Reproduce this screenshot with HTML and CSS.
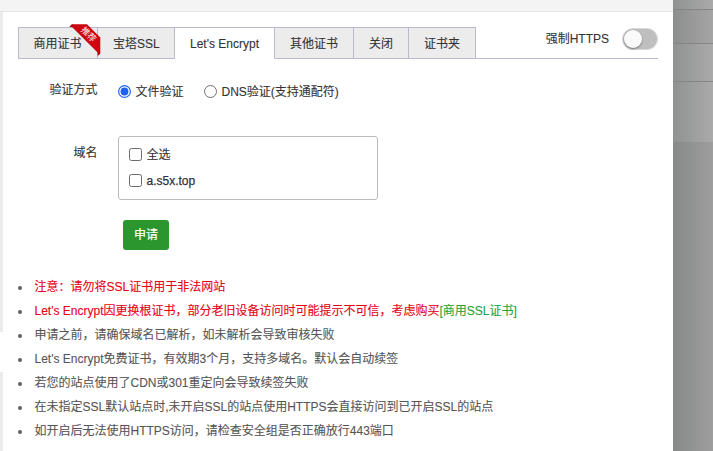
FILE: index.html
```html
<!DOCTYPE html>
<html lang="zh-CN">
<head>
<meta charset="utf-8">
<title>SSL</title>
<link rel="stylesheet" href="styles.css">
</head>
<body>
<div class="screen">
  <div class="dialog">
    <header class="dialog-head"></header>
    <div class="dialog-body">
      <aside class="side"><div class="side-active"></div></aside>
      <main class="content">
        <div class="tabbar">
          <nav class="tabs">
            <span class="tab t1">商用证书
              <svg class="ribbon" width="34" height="34" viewBox="0 0 34 34"><path d="M.5 3 3 .3H18L31.3 13.6V29.5L28.8 31.8V28.8L3 3Z" fill="#ce0610"/><path d="M.5 3 3 .3 5 3ZM31.3 29.5 28.8 31.8V27Z" fill="#a8000a"/><text x="19.6" y="13.4" transform="rotate(45 19.6 10.4)" text-anchor="middle" class="ribbon-text">推荐</text></svg>
            </span>
            <span class="tab t2">宝塔SSL</span>
            <span class="tab t3 on">Let's Encrypt</span>
            <span class="tab t4">其他证书</span>
            <span class="tab t5">关闭</span>
            <span class="tab t6">证书夹</span>
          </nav>
          <div class="force"><span>强制HTTPS</span><span class="switch"><i class="knob"></i></span></div>
        </div>
        <div class="row method">
          <span class="label">验证方式</span>
          <label class="option first"><svg width="13" height="13"><circle cx="6.5" cy="6.5" r="5.9" fill="#fff" stroke="#1e66f5" stroke-width="1.2"/><circle cx="6.5" cy="6.5" r="3.9" fill="#1e60f5"/></svg><span class="caption">文件验证</span></label>
          <label class="option"><svg width="13" height="13"><circle cx="6.5" cy="6.5" r="6" fill="#fff" stroke="#717171"/></svg><span class="caption">DNS验证(支持通配符)</span></label>
        </div>
        <div class="row domains">
          <span class="label">域名</span>
          <div class="box">
            <label class="check"><i class="square"></i><span class="name">全选</span></label>
            <label class="check"><i class="square"></i><span class="name site">a.s5x.top</span></label>
          </div>
        </div>
        <button class="apply">申请</button>
        <ul class="notes">
          <li><span class="red">注意：请勿将SSL证书用于非法网站</span></li>
          <li><span class="red">Let's Encrypt因更换根证书，部分老旧设备访问时可能提示不可信，考虑购买</span><span class="green">[商用SSL证书]</span></li>
          <li>申请之前，请确保域名已解析，如未解析会导致审核失败</li>
          <li>Let's Encrypt免费证书，有效期3个月，支持多域名。默认会自动续签</li>
          <li>若您的站点使用了CDN或301重定向会导致续签失败</li>
          <li>在未指定SSL默认站点时,未开启SSL的站点使用HTTPS会直接访问到已开启SSL的站点</li>
          <li>如开启后无法使用HTTPS访问，请检查安全组是否正确放行443端口</li>
        </ul>
      </main>
    </div>
  </div>
  <div class="backdrop"><div class="b1"></div><div class="b2"></div><div class="b3"></div><div class="b4"></div></div>
</div>
</body>
</html>
```
FILE: styles.css
```css
* { box-sizing: border-box; }
body { margin: 0; font: 12px/17px "Liberation Sans", "Noto Sans CJK SC", sans-serif; color: #333; overflow: hidden; -webkit-text-stroke: 0.1px currentColor; }
.screen { display: flex; width: 713px; height: 451px; }
.dialog { width: 673px; background: #fff; }
.dialog-head { height: 12px; background: #f4f4f4; border-bottom: 1px solid #e6e6e6; }
.dialog-body { display: flex; height: 439px; }
.side { width: 3px; background: #ebebeb; padding-top: 320px; }
.side-active { height: 40px; background: #fff; }
.content { flex: 1; padding: 15px 15px 0; }
.tabbar { display: flex; justify-content: space-between; height: 32px; border-bottom: 1px solid #bbb8d0; }
.tabs { display: flex; height: 32px; border-left: 1px solid #bbb8d0; }
.tab { position: relative; height: 32px; padding-left: 15px; line-height: 32px; white-space: nowrap; background: #ececec; border: solid #bbb8d0; border-width: 1px 1px 1px 0; }
.t1 { width: 79px; padding-left: 14.5px; }
.t2 { width: 77px; }
.t3 { width: 100px; }
.t4 { width: 79px; }
.t5 { width: 55px; }
.t6 { width: 67px; }
.on { background: #fff; border-bottom-color: #fff; }
.ribbon { position: absolute; left: 50px; top: -4px; z-index: 1; }
.ribbon-text { font-size: 8.5px; fill: #fff; }
.force { display: flex; height: 24px; align-items: center; gap: 13px; }
.switch { width: 36px; height: 22px; border-radius: 11px; background: #bfbfbf; border: 1px solid #d8d8d8; padding: 1px; }
.knob { display: block; width: 18px; height: 18px; border-radius: 50%; background: #fafafa; box-shadow: 0 1px 2px #777; }
.row { display: flex; }
.label { width: 79.5px; text-align: right; }
.method { margin-top: 23px; height: 20px; }
.option { display: flex; align-items: center; gap: 4.5px; height: 19px; margin-left: 20.5px; }
.option svg { display: block; }
.caption { padding-top: 1px; }
.domains { margin-top: 34px; }
.domains .label { padding-top: 9px; }
.box { width: 260px; height: 64px; margin-left: 20.5px; border: 1px solid #bbb; border-radius: 3px; padding: 4px 10px; }
.check { display: flex; align-items: center; height: 26px; gap: 4.5px; }
.name { padding-top: 2px; }
.square { width: 13px; height: 13px; border: 1px solid #6b6b6b; border-radius: 2.5px; }
.site { -webkit-text-stroke: 0.25px #333; }
.apply { display: block; width: 46px; height: 30px; margin: 20px 0 0 105px; padding: 0; border: 0; border-radius: 3px; background: #2b962e; color: #fff; font: inherit; -webkit-text-stroke: 0.2px #fff; }
.notes { margin: 25px 0 0; padding: 0; list-style: none; color: #555; line-height: 24px; white-space: nowrap; }
.notes li { display: flex; align-items: center; height: 24px; }
.notes li::before { content: ""; width: 4px; height: 4px; margin: 2px 12.5px 0 0; border-radius: 50%; background: #606060; }
.red { color: #e60012; }
.green { color: #20a53a; }
.backdrop { flex: 1; display: flex; flex-direction: column; background: linear-gradient(90deg, #878888, #9e9e9e); }
.b1, .b2, .b3, .b4 { background: linear-gradient(90deg, #909191, #aaa); }
.b1 { height: 10px; border-bottom: 1px solid #858585; }
.b2 { height: 34px; background: linear-gradient(90deg, #8c8d8d, #a5a5a5); border-bottom: 1px solid #858585; }
.b3 { height: 38px; border-bottom: 1px solid #858585; }
.b4 { height: 60px; }
```
